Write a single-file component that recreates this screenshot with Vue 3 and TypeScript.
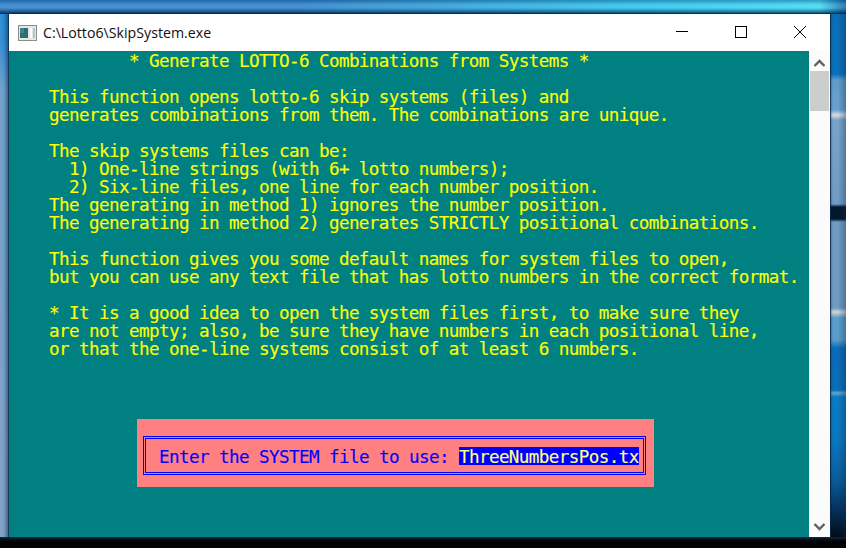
<script setup lang="ts">
const consoleText = `            * Generate LOTTO-6 Combinations from Systems *

    This function opens lotto-6 skip systems (files) and
    generates combinations from them. The combinations are unique.

    The skip systems files can be:
      1) One-line strings (with 6+ lotto numbers);
      2) Six-line files, one line for each number position.
    The generating in method 1) ignores the number position.
    The generating in method 2) generates STRICTLY positional combinations.

    This function gives you some default names for system files to open,
    but you can use any text file that has lotto numbers in the correct format.

    * It is a good idea to open the system files first, to make sure they
    are not empty; also, be sure they have numbers in each positional line,
    or that the one-line systems consist of at least 6 numbers.`
</script>

<template>
  <div class="desktop">
    <div class="window">
      <header class="titlebar">
        <svg class="app-icon" width="19" height="16" viewBox="0 0 19 16">
          <rect x="0.5" y="0.5" width="18" height="15" fill="#e6e6e6" stroke="#8c8c8c" />
          <rect x="2" y="3" width="8" height="10" fill="#2f6f6a" />
          <rect x="2" y="3" width="4" height="5" fill="#3f7f9f" />
          <rect x="12" y="3" width="2" height="10" fill="#fff" />
          <rect x="15" y="3" width="2" height="10" fill="#b9c4c4" />
        </svg>
        <span class="title">C:\Lotto6\SkipSystem.exe</span>
        <div class="controls">
          <svg class="ctl" width="46" height="37" viewBox="0 0 46 37">
            <path d="M17 17.5H29" stroke="#000" fill="none" />
          </svg>
          <svg class="ctl" width="46" height="37" viewBox="0 0 46 37">
            <rect x="17.5" y="12.5" width="11" height="11" stroke="#000" fill="none" />
          </svg>
          <svg class="ctl" width="46" height="37" viewBox="0 0 46 37">
            <path d="M17 12L29 24M29 12L17 24" stroke="#000" fill="none" />
          </svg>
        </div>
      </header>
      <div class="client">
        <main class="console">
          <pre class="text">{{ consoleText }}</pre>
          <div class="dialog">
            <div class="dialog-frame">
              <span class="prompt">Enter the SYSTEM file to use: </span><span class="input">ThreeNumbersPos.tx</span>
            </div>
          </div>
        </main>
        <aside class="scrollbar">
          <svg width="21" height="17" viewBox="0 0 21 17">
            <path d="M5.5 12L10.5 7L15.5 12" stroke="#606060" stroke-width="2.4" fill="none" />
          </svg>
          <div class="thumb"></div>
          <div class="track"></div>
          <svg width="21" height="17" viewBox="0 0 21 17">
            <path d="M5.5 6L10.5 11L15.5 6" stroke="#606060" stroke-width="2.4" fill="none" />
          </svg>
        </aside>
      </div>
    </div>
  </div>
</template>

<style>
html, body { margin: 0; padding: 0; overflow: hidden; background: #000; }
</style>

<style scoped>
.desktop {
  width: 846px;
  height: 548px;
  box-sizing: border-box;
  padding: 14px 16px 11px 9px;
  background:
    /* top strip: vertical shading over a horizontal colour run */
    linear-gradient(180deg, rgba(0, 50, 110, 0.35) 0, rgba(255, 255, 255, 0.12) 5px, rgba(255, 255, 255, 0.1) 8px, rgba(0, 40, 90, 0.55) 12px, rgba(0, 20, 60, 0.85) 14px) 0 0 / 100% 14px no-repeat,
    linear-gradient(90deg, #2f83c8 0, #2f83c8 300px, #2fc4ea 640px, #40d8f2 820px, #1a6ca8 846px) 0 0 / 100% 14px no-repeat,
    /* bottom strip */
    linear-gradient(180deg, #0b2c4c 0, #06121f 2px, #000 5px, #020408 11px) 0 537px / 100% 11px no-repeat,
    /* left side */
    linear-gradient(90deg, rgba(255, 255, 255, 0.08) 0, rgba(255, 255, 255, 0) 4px, rgba(10, 30, 60, 0.55) 9px) 0 0 / 9px 100% no-repeat,
    linear-gradient(180deg, #1f86d2 0, #2a88d0 40px, #6a9cc8 90px, #7a9cc4 480px, #7a9cc4 548px) 0 0 / 9px 100% no-repeat,
    /* right side shading */
    linear-gradient(90deg, rgba(0, 30, 70, 0.45) 0, rgba(0, 0, 0, 0) 3px, rgba(0, 0, 0, 0) 8px, rgba(20, 40, 70, 0.35) 16px) 830px 0 / 16px 100% no-repeat,
    /* right side bands */
    linear-gradient(180deg, #0a6fb8 0, #0a70ba 74px, #5f9ccc 80px, #6aa2d0 110px, #d8dfe0 115px, #78a4cc 120px, #6f9cc4 204px, #02162e 207px, #02162e 219px, #6f9cc4 222px, #6f9cc4 308px, #d0d8d8 312px, #5a9ccc 318px, #5a9ccc 340px, #0a6cb8 348px, #0a6eb8 390px, #5fa8d0 393px, #0a7cc4 397px, #0a78c0 440px, #0a5c9c 480px, #03305c 510px, #000 545px);
}
.window {
  width: 821px;
  height: 523px;
  display: flex;
  flex-direction: column;
  background: #fcfcfc;
  box-shadow: 0 0 0 1px rgba(10, 40, 70, 0.7);
}
.titlebar {
  height: 37px;
  flex: none;
  display: flex;
  align-items: center;
  padding-left: 9px;
  box-sizing: border-box;
  background: #fff;
}
.app-icon { flex: none; margin-top: 1px; }
.title {
  margin-left: 6px;
  font: 14.2px "Open Sans", "Noto Sans", sans-serif;
  color: #101010;
}
.controls { margin-left: auto; display: flex; margin-right: 7px; }
.ctl { display: block; margin-left: 13px; }
.client { flex: 1; display: flex; min-height: 0; }
.console {
  width: 800px;
  flex: none;
  background: #008080;
  padding: 1px 0 0 0;
  box-sizing: border-box;
  font-family: "DejaVu Sans Mono", "Liberation Mono", monospace;
  font-size: 17.6px;
  letter-spacing: -0.596px;
}
.text {
  margin: 0;
  font: inherit;
  letter-spacing: inherit;
  line-height: 18px;
  color: #ffff00;
  white-space: pre;
  -webkit-text-stroke: 0.15px #ffff00;
}
.dialog {
  width: 517px;
  height: 68px;
  margin: 61px 0 0 128px;
  padding: 17px 8px 12px 6px;
  box-sizing: border-box;
  background: #ff8080;
}
.dialog-frame {
  height: 39px;
  box-sizing: border-box;
  border: 3px double #0000ff;
  display: flex;
  align-items: flex-start;
  padding: 8px 0 0 13px;
  line-height: 18px;
  white-space: pre;
  color: #0000ff;
  -webkit-text-stroke: 0.15px currentColor;
}
.prompt, .input {
  display: block;
  height: 18px;
  box-sizing: border-box;
  padding-top: 1px;
}
.input { background: #0000ff; color: #ffff80; }
.scrollbar {
  width: 21px;
  flex: none;
  display: flex;
  flex-direction: column;
  align-items: center;
  background: #fbfbfb;
}
.scrollbar svg { flex: none; margin-top: 3px; }
.scrollbar svg:last-child { margin-top: 0; margin-bottom: 2px; }
.thumb { width: 19px; height: 40px; flex: none; background: #cdcdcd; }
.track { flex: 1; }
</style>
